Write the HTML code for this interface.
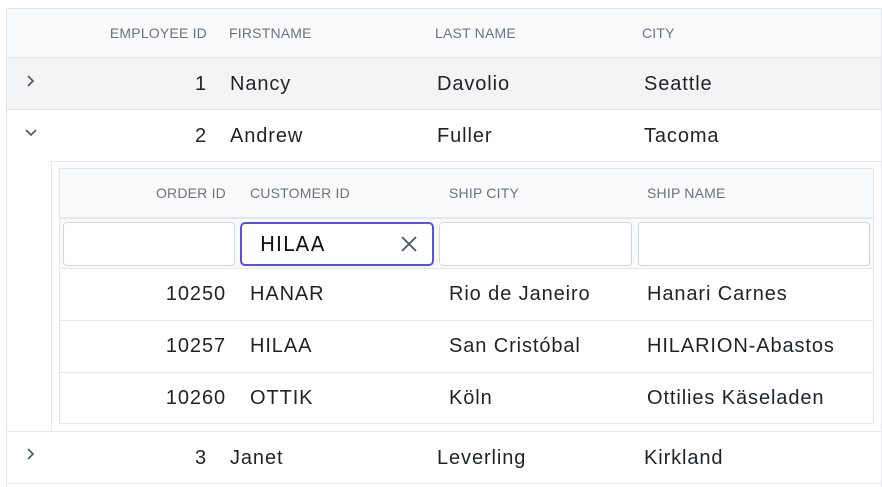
<!DOCTYPE html>
<html><head><style>
*{box-sizing:border-box;margin:0;padding:0}
body{width:882px;height:487px;background:#fff;font-family:"Liberation Sans",sans-serif;position:relative;overflow:hidden;color:#212529}
.a{position:absolute}
.h{font-size:14px;color:#6b7280;position:absolute;line-height:16px;letter-spacing:0.2px}
.t{font-size:20px;position:absolute;line-height:24px;color:#1f2328;letter-spacing:0.9px}
.r{text-align:right}
.hl{position:absolute;height:1px;background:#e5e7eb}
.inp{position:absolute;top:222px;height:44px;border:1px solid #d1d5db;border-radius:4px;background:#fff}
</style></head><body>
<div class="a" style="left:6px;top:8px;width:876px;height:479px;border-left:1px solid #e5e7eb;border-top:1px solid #e5e7eb;border-right:1px solid #e5e7eb"></div>
<div class="a" style="left:7px;top:9px;width:874px;height:48px;background:#f9fafb"></div>
<div class="hl" style="left:6px;top:57px;width:876px"></div>
<div class="h r" style="left:60px;width:147px;top:25px">EMPLOYEE ID</div>
<div class="h" style="left:229px;top:25px">FIRSTNAME</div>
<div class="h" style="left:435px;top:25px">LAST NAME</div>
<div class="h" style="left:642px;top:25px">CITY</div>
<div class="a" style="left:7px;top:58px;width:874px;height:51px;background:#f3f4f6"></div>
<div class="hl" style="left:6px;top:109px;width:876px"></div>
<svg class="a" style="left:24px;top:74px" width="14" height="14"><path d="M4 2l5 5-5 5" fill="none" stroke="#4b5563" stroke-width="1.6"/></svg>
<div class="t r" style="left:60px;width:147px;top:72px">1</div>
<div class="t" style="left:230px;top:72px">Nancy</div>
<div class="t" style="left:437px;top:72px">Davolio</div>
<div class="t" style="left:644px;top:72px">Seattle</div>
<svg class="a" style="left:24px;top:126px" width="14" height="14"><path d="M2 4l5 5 5-5" fill="none" stroke="#4b5563" stroke-width="1.6"/></svg>
<div class="t r" style="left:60px;width:147px;top:124px">2</div>
<div class="t" style="left:230px;top:124px">Andrew</div>
<div class="t" style="left:437px;top:124px">Fuller</div>
<div class="t" style="left:644px;top:124px">Tacoma</div>
<div class="hl" style="left:51px;top:161px;width:831px"></div>
<div class="a" style="left:51px;top:161px;width:1px;height:270px;background:#e5e7eb"></div>
<div class="a" style="left:59px;top:168px;width:815px;height:256px;border:1px solid #e5e7eb"></div>
<div class="a" style="left:60px;top:169px;width:813px;height:48px;background:#f9fafb"></div>
<div class="a" style="left:60px;top:217px;width:813px;height:52px;background:#f9fafb;border-top:2px solid #e5e7eb;border-bottom:1px solid #e5e7eb"></div>
<div class="h r" style="left:100px;width:126px;top:185px">ORDER ID</div>
<div class="h" style="left:250px;top:185px">CUSTOMER ID</div>
<div class="h" style="left:449px;top:185px">SHIP CITY</div>
<div class="h" style="left:647px;top:185px">SHIP NAME</div>
<div class="inp" style="left:63px;width:172px"></div>
<div class="inp" style="left:240px;width:194px;border:2px solid #5b4fe6;border-radius:5px"></div>
<div class="a" style="left:260px;top:232px;font-size:20px;font-family:'Comic Sans MS','DejaVu Sans',cursive;color:#111;letter-spacing:1px">HILAA</div>
<svg class="a" style="left:400px;top:235px" width="18" height="18"><path d="M2 2l14 14M16 2L2 16" stroke="#4b5563" stroke-width="1.8"/></svg>
<div class="inp" style="left:439px;width:193px"></div>
<div class="inp" style="left:638px;width:232px"></div>
<div class="hl" style="left:60px;top:320px;width:813px"></div>
<div class="hl" style="left:60px;top:372px;width:813px"></div>
<div class="t r" style="left:100px;width:126px;top:282px">10250</div>
<div class="t" style="left:250px;top:282px">HANAR</div>
<div class="t" style="left:449px;top:282px">Rio de Janeiro</div>
<div class="t" style="left:647px;top:282px">Hanari Carnes</div>
<div class="t r" style="left:100px;width:126px;top:334px">10257</div>
<div class="t" style="left:250px;top:334px">HILAA</div>
<div class="t" style="left:449px;top:334px">San Cristóbal</div>
<div class="t" style="left:647px;top:334px">HILARION-Abastos</div>
<div class="t r" style="left:100px;width:126px;top:386px">10260</div>
<div class="t" style="left:250px;top:386px">OTTIK</div>
<div class="t" style="left:449px;top:386px">Köln</div>
<div class="t" style="left:647px;top:386px">Ottilies Käseladen</div>
<div class="hl" style="left:6px;top:431px;width:876px"></div>
<svg class="a" style="left:24px;top:447px" width="14" height="14"><path d="M4 2l5 5-5 5" fill="none" stroke="#4b5563" stroke-width="1.6"/></svg>
<div class="t r" style="left:60px;width:147px;top:446px">3</div>
<div class="t" style="left:230px;top:446px">Janet</div>
<div class="t" style="left:437px;top:446px">Leverling</div>
<div class="t" style="left:644px;top:446px">Kirkland</div>
<div class="hl" style="left:6px;top:483px;width:876px"></div>
</body></html>
